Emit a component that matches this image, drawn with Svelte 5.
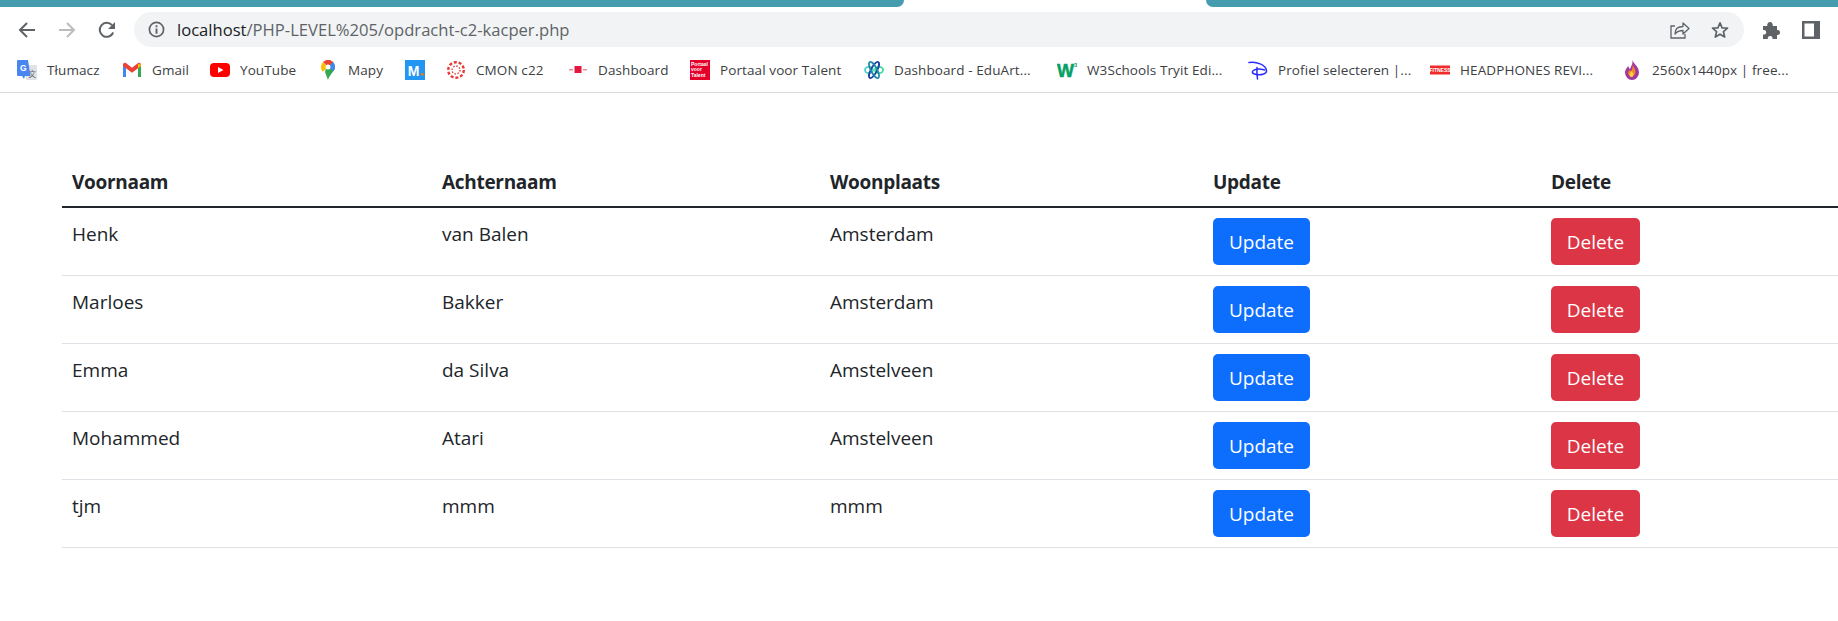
<script>
  const bookmarks = [
    { id: 'translate', label: 'Tłumacz', w: 105 },
    { id: 'gmail', label: 'Gmail', w: 88 },
    { id: 'youtube', label: 'YouTube', w: 108 },
    { id: 'maps', label: 'Mapy', w: 87 },
    { id: 'm', label: '', w: 41 },
    { id: 'cmon', label: 'CMON c22', w: 122 },
    { id: 'dash', label: 'Dashboard', w: 122 },
    { id: 'portaal', label: 'Portaal voor Talent', w: 174 },
    { id: 'edu', label: 'Dashboard - EduArt...', w: 193 },
    { id: 'w3', label: 'W3Schools Tryit Edi...', w: 191 },
    { id: 'disney', label: 'Profiel selecteren |...', w: 182 },
    { id: 'fit', label: 'HEADPHONES REVI...', w: 192 },
    { id: 'flame', label: '2560x1440px | free...', w: 190 }
  ];
  const rows = [
    ['Henk', 'van Balen', 'Amsterdam'],
    ['Marloes', 'Bakker', 'Amsterdam'],
    ['Emma', 'da Silva', 'Amstelveen'],
    ['Mohammed', 'Atari', 'Amstelveen'],
    ['tjm', 'mmm', 'mmm']
  ];
</script>

<div class="tabstrip">
  <div class="tab left"></div>
  <div class="tab right"></div>
</div>

<div class="toolbar">
  <svg class="nav" viewBox="0 0 18 18"><path d="M17 9H2M9 2 2 9l7 7" fill="none" stroke="#5f6368" stroke-width="2"/></svg>
  <svg class="nav" viewBox="0 0 18 18"><path d="M1 9h15M9 2l7 7-7 7" fill="none" stroke="#babcbe" stroke-width="2"/></svg>
  <svg class="nav" viewBox="0 0 18 18"><path d="M15.2 11.5A7 7 0 1 1 14 4.2" fill="none" stroke="#5f6368" stroke-width="2"/><path d="M17 1v7h-7z" fill="#5f6368"/></svg>
  <div class="omnibox">
    <svg class="info" viewBox="0 0 18 18"><circle cx="9" cy="9" r="7.5" fill="none" stroke="#5f6368" stroke-width="1.8"/><path d="M8 8h2v5.5H8zM8 4.6h2v2H8z" fill="#5f6368"/></svg>
    <span class="url"><span class="host">localhost</span>/PHP-LEVEL%205/opdracht-c2-kacper.php</span>
    <svg class="share" viewBox="0 0 20 18"><path d="M1 5v12h14v-4M1 17l0-12h4" fill="none" stroke="#5f6368" stroke-width="1.3"/><path d="M5 13c0-5 3-7.5 8-7.5V2l6 5.5-6 5.5V9.5c-3.500 0-6 1-8 3.500z" fill="none" stroke="#5f6368" stroke-width="1.3" stroke-linejoin="round"/></svg>
    <svg class="star" viewBox="0 0 18 18"><path d="M9 1.800l2.100 5 5.400.4-4.100 3.500 1.300 5.300L9 13.200 4.300 16l1.300-5.300L1.500 7.200l5.400-.4z" fill="none" stroke="#5f6368" stroke-width="1.700" stroke-linejoin="round"/></svg>
  </div>
  <svg class="puzzle" viewBox="0 0 18 18"><path d="M1 5h4.200C5 2.800 6 1 8 1s3 1.800 2.800 4H15v4c2-.3 3 .8 3 2.500S17 14.300 15 14v4H10.500c.3-2-.7-3-2.300-3s-2.700 1-2.400 3H1v-4.500c2 .3 3.200-.7 3.200-2.300S3 8.700 1 9z" fill="#5f6368"/></svg>
  <svg class="panel" viewBox="0 0 18 18"><path fill-rule="evenodd" d="M0 0h18v18H0zM2.500 2.500v13H12v-13z" fill="#5f6368"/></svg>
</div>

<div class="bookmarks">
  {#each bookmarks as b}
    <div class="bookmark" style="width:{b.w}px">
      <svg class="fav" viewBox="0 0 20 20">
        {#if b.id === 'translate'}
          <path d="M8 5h11a1 1 0 0 1 1 1v13a1 1 0 0 1-1 1H9z" fill="#e0e2e5"/>
          <text x="11.500" y="17" class="ft" font-size="7.500" fill="#5f6368">文</text>
          <path d="M1 0h10l2.500 16H8l-1 3-2-3H1a1 1 0 0 1-1-1V1a1 1 0 0 1 1-1z" fill="#4a86f0"/>
          <text x="3" y="11" class="ft" font-size="8.500" font-weight="700" fill="#fff">G</text>
        {:else if b.id === 'gmail'}
          <path d="M1 17V5.500l3 2V17H1z" fill="#4285f4"/>
          <path d="M16 17V7.500l3-2V17h-3z" fill="#34a853"/>
          <path d="M1 4.800c0-1.800 2-2.500 3.200-1.500L10 7.700l5.800-4.400c1.200-1 3.200-.3 3.200 1.500v1.200l-3 2.200-6 4.500-6-4.500-3-2.200z" fill="#ea4335"/>
          <path d="M16 3.500 19 4.800V6l-3 2.200z" fill="#fbbc04"/>
        {:else if b.id === 'youtube'}
          <rect x="0" y="3" width="20" height="14" rx="4" fill="#f00"/>
          <path d="M8 7l5.500 3L8 13z" fill="#fff"/>
        {:else if b.id === 'maps'}
          <path d="M10 0a7 7 0 0 1 7 7c0 2-.8 3.300-2 4.800-1.800 2.400-4 4.600-5 8.200l-3-8z" fill="#34a853"/>
          <path d="M15 1.900A7 7 0 0 1 15.500 11L10.500 7z" fill="#4285f4"/>
          <path d="M5 2a7 7 0 0 1 10 0L10 7z" fill="#ea4335"/>
          <path d="M5 2 10 7 4.800 11.800C3.600 10.300 3 9 3 7a7 7 0 0 1 2-5z" fill="#fbbc04"/>
          <circle cx="10" cy="7" r="2.500" fill="#fff"/>
        {:else if b.id === 'm'}
          <rect width="20" height="20" fill="#2196f3"/>
          <text x="8.500" y="15.500" class="ft" text-anchor="middle" font-size="14" font-weight="700" fill="#fff">M</text>
          <rect x="16" y="13" width="2.500" height="2.500" fill="#f57c00"/>
        {:else if b.id === 'cmon'}
          <g fill="none" stroke="#e53935">
            <circle cx="10" cy="10" r="7.800" stroke-width="2.400" stroke-dasharray="3 1.900"/>
            <circle cx="10" cy="10" r="4" stroke-width="1.400" stroke-dasharray="1.500 1.600"/>
          </g>
        {:else if b.id === 'dash'}
          <rect x="6.500" y="6" width="7" height="7" fill="#e5173f"/>
          <rect x="1" y="9" width="4" height="1.500" fill="#ef8a9c"/>
          <rect x="15" y="9" width="4" height="1.500" fill="#ef8a9c"/>
        {:else if b.id === 'portaal'}
          <rect width="20" height="20" fill="#e4002b"/>
          <text x="1" y="5.500" class="ft" font-size="5" font-weight="700" fill="#fff">Portaal</text>
          <text x="1" y="11" class="ft" font-size="5" font-weight="700" fill="#fff">voor</text>
          <text x="1" y="17" class="ft" font-size="5" font-weight="700" fill="#fff">Talent</text>
        {:else if b.id === 'edu'}
          <g fill="none" stroke-width="1.800">
            <ellipse cx="5" cy="10" rx="4" ry="3.200" stroke="#4dd0c8"/>
            <ellipse cx="15" cy="10" rx="4" ry="3.200" stroke="#3ddc97"/>
            <ellipse cx="10" cy="10" rx="3" ry="9" transform="rotate(28 10 10)" stroke="#1a3fa0"/>
            <ellipse cx="10" cy="10" rx="3" ry="9" transform="rotate(-28 10 10)" stroke="#1e88a8"/>
          </g>
        {:else if b.id === 'w3'}
          <text x="8.500" y="17" class="ft" text-anchor="middle" font-size="18" font-weight="700" fill="#04a066" stroke="#04a066" stroke-width="0.500">W</text>
          <text x="17" y="6.500" class="ft" font-size="6" font-weight="700" fill="#04a066">3</text>
        {:else if b.id === 'disney'}
          <g fill="none" stroke="#2a2cff" stroke-width="1.500" stroke-linecap="round">
            <path d="M1 2.500C8 1 18 5 18.500 10.500c.3 3.500-6 5.500-12 3.500-3-1-3-3.500 1-4.500 4-1 7 0 9 .5"/>
            <path d="M9 7.500c-.3 4 0 8.500.5 11.500"/>
          </g>
        {:else if b.id === 'fit'}
          <rect x="0" y="5.500" width="20" height="9" fill="#ee2a2a"/>
          <text x="10" y="12" class="ft" text-anchor="middle" font-size="5" font-weight="700" fill="#fff">FITNESS</text>
        {:else if b.id === 'flame'}
          <path d="M10.500 0c1 4 6.500 6.500 6.500 12.500A7 7.500 0 0 1 3 12.500C3 9.500 5 7.500 6.500 6c0 1.500.5 2.500 1.500 3C9 6.500 11 4 10.500 0z" fill="#a2389f"/>
          <path d="M10.500 4c.5 3 3 4.500 3 8a4 5 0 0 1-7.500 1.500C6 11.500 7 10.500 8 10c.5 1 1 1 1.500.5 1-2 1.500-4 1-6.500z" fill="#f08a24"/>
          <path d="M10 11c0 1.500 1.500 2 1.500 3.500a2 2.500 0 0 1-4 0c0-1 1-1.500 2.500-3.500z" fill="#ffd23f"/>
        {/if}
      </svg>
      {#if b.label}<span class="bm-label">{b.label}</span>{/if}
    </div>
  {/each}
</div>

<main class="content">
  <table>
    <colgroup>
      <col class="c1" /><col class="c2" /><col class="c3" /><col class="c4" /><col class="c5" />
    </colgroup>
    <thead>
      <tr>
        <th>Voornaam</th><th>Achternaam</th><th>Woonplaats</th><th>Update</th><th>Delete</th>
      </tr>
    </thead>
    <tbody>
      {#each rows as r}
        <tr>
          <td class="txt">{r[0]}</td>
          <td class="txt">{r[1]}</td>
          <td class="txt">{r[2]}</td>
          <td><button class="btn blue">Update</button></td>
          <td><button class="btn red">Delete</button></td>
        </tr>
      {/each}
    </tbody>
  </table>
</main>

<style>
  :global(body) {
    margin: 0;
    background: #fff;
    overflow: hidden;
    font-family: "Open Sans", "Noto Sans", sans-serif;
    color: #212529;
  }
  .tabstrip {
    display: flex;
    justify-content: space-between;
    height: 7px;
  }
  .tab {
    background: #459cae;
  }
  .tab.left {
    width: 904px;
    border-bottom-right-radius: 8px;
  }
  .tab.right {
    width: 632px;
    border-bottom-left-radius: 8px;
  }
  .toolbar {
    display: flex;
    align-items: center;
    height: 35px;
    padding: 5px 0 0 18px;
  }
  .nav {
    width: 18px;
    height: 18px;
    margin-right: 22px;
    flex: none;
  }
  .nav:nth-child(3) {
    margin-right: 18px;
  }
  .omnibox {
    display: flex;
    align-items: center;
    width: 1610px;
    height: 35px;
    box-sizing: border-box;
    padding: 0 15px 0 14px;
    background: #f1f3f4;
    border-radius: 18px;
    flex: none;
  }
  .info {
    width: 17px;
    height: 17px;
    margin-right: 12px;
    flex: none;
  }
  .url {
    flex: 1;
    font-size: 16.600px;
    color: #5f6368;
    white-space: nowrap;
  }
  .host {
    color: #202124;
  }
  .share {
    width: 20px;
    height: 18px;
    margin-right: 21px;
  }
  .star {
    width: 18px;
    height: 18px;
  }
  .puzzle {
    width: 18px;
    height: 18px;
    margin-left: 18px;
    flex: none;
  }
  .panel {
    width: 18px;
    height: 18px;
    margin-left: 22px;
    flex: none;
  }
  .bookmarks {
    display: flex;
    align-items: center;
    height: 46px;
    box-sizing: border-box;
    padding: 3px 0 3px 17px;
    border-bottom: 1px solid #dcdcdc;
  }
  .bookmark {
    display: flex;
    align-items: center;
    gap: 10px;
    flex: none;
  }
  .fav {
    width: 20px;
    height: 20px;
    flex: none;
  }
  .ft {
    font-family: "Liberation Sans", "Noto Sans CJK SC", sans-serif;
  }
  .bm-label {
    font-size: 13.500px;
    letter-spacing: 0.1px;
    color: #3c4043;
    white-space: nowrap;
  }
  .content {
    padding: 63px 0 0 62px;
  }
  table {
    width: 1776px;
    table-layout: fixed;
    border-collapse: collapse;
    font-size: 19px;
    line-height: 30px;
  }
  .c1 { width: 370px; }
  .c2 { width: 388px; }
  .c3 { width: 383px; }
  .c4 { width: 338px; }
  .c5 { width: 297px; }
  th {
    text-align: left;
    font-weight: 700;
    letter-spacing: -0.3px;
    padding: 11px 10px 9px;
    border-bottom: 2px solid #212529;
  }
  td {
    padding: 10px;
    vertical-align: top;
    border-bottom: 1px solid #dee2e6;
  }
  td.txt {
    padding-top: 11px;
  }
  .btn {
    display: block;
    height: 47px;
    padding: 1px 0 0;
    border: none;
    border-radius: 5px;
    color: #fff;
    font: inherit;
  }
  .blue {
    width: 97px;
    background: #0d6efd;
  }
  .red {
    width: 89px;
    background: #dc3545;
  }
</style>
